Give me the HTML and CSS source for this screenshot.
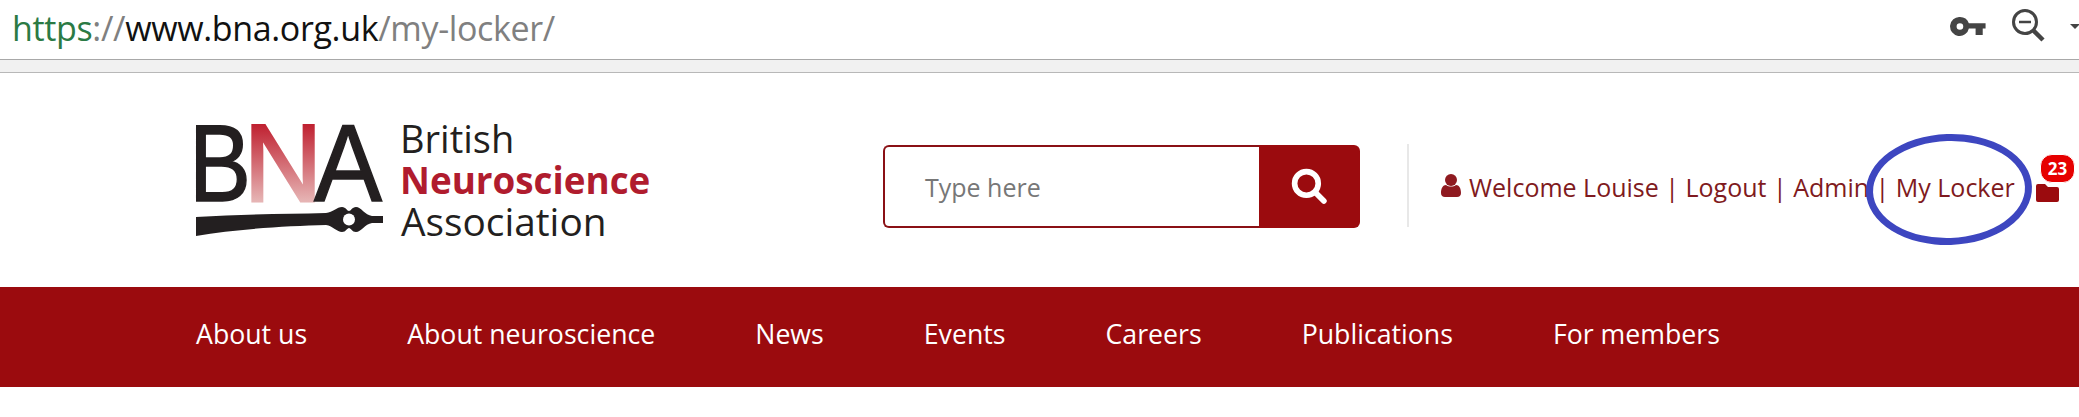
FILE: index.html
```html
<!DOCTYPE html>
<html lang="en">
<head>
    <meta charset="UTF-8">
    <meta name="viewport" content="width=device-width, initial-scale=1.0">
    <title>My Locker</title>
    <link rel="stylesheet" href="styles.css">
</head>
<body>
    <div class="addressbar">
        <div class="url"><span class="scheme">https</span><span class="path">://</span><span class="host">www.bna.org.uk</span><span class="path">/my-locker/</span></div>
        <div class="browser-icons">
            <svg class="key-icon" width="36" height="19" viewBox="0 0 37 20">
                <path fill="#444" fill-rule="evenodd" d="M10 0a10 10 0 0 1 9.4 6.5H37v5.500h-3v7h-7.500v-7H19.400A10 10 0 1 1 10 0zm0 6.500a3.500 3.500 0 1 0 0 7 3.500 3.500 0 0 0 0-7z"/>
            </svg>
            <svg class="zoom-icon" width="34" height="34" viewBox="0 0 34 34">
                <circle cx="14" cy="13" r="11.500" fill="none" stroke="#444" stroke-width="3"/>
                <path d="M8 13h12" stroke="#444" stroke-width="2.500"/>
                <path d="M22 21l10 10" stroke="#444" stroke-width="4.500"/>
            </svg>
            <span class="caret"></span>
        </div>
    </div>
    <div class="tabstrip"></div>

    <header class="header">
        <div class="logo">
            <svg class="logo-mark" width="200" height="140" viewBox="0 -22 200 140">
                <defs>
                    <linearGradient id="fadeRed" gradientUnits="userSpaceOnUse" x1="0" y1="3" x2="0" y2="81">
                        <stop offset="0" stop-color="#bf1e2e"/>
                        <stop offset="1" stop-color="#e6b4b4"/>
                    </linearGradient>
                </defs>
                <text class="logo-letter" x="3" y="81" textLength="62" lengthAdjust="spacingAndGlyphs">B</text>
                <text class="logo-letter logo-n" x="58" y="81" textLength="78" lengthAdjust="spacingAndGlyphs">N</text>
                <text class="logo-letter" x="128" y="81" textLength="68" lengthAdjust="spacingAndGlyphs">A</text>
                <path fill="#231f20" d="M10 97C55 94 100 94 140 93C147 92 151 87 156 87C160 87 161 91 163 91C165 91 166 87 170 87C175 87 179 95 186 96H197V103H186C179 104 175 112 170 112C166 112 165 108 163 108C161 108 160 112 156 112C151 112 147 106 140 105C100 106 50 109 10 116z"/>
                <circle cx="163" cy="99.500" r="6" fill="#fff"/>
            </svg>
            <div class="logo-text">
                <span>British</span>
                <strong>Neuroscience</strong>
                <span class="logo-assoc">Association</span>
            </div>
        </div>

        <form class="search">
            <div class="search-field">Type here</div>
            <div class="search-btn">
                <svg width="37" height="37" viewBox="0 0 36 36">
                    <circle cx="15" cy="15" r="11.500" fill="none" stroke="#fff" stroke-width="5.500"/>
                    <path d="M24 24l8 8" stroke="#fff" stroke-width="5.500" stroke-linecap="round"/>
                </svg>
            </div>
        </form>

        <div class="usernav">
            <svg class="user-icon" width="20" height="23" viewBox="0 0 20 23">
                <circle cx="10" cy="6" r="6" fill="#8f1a20"/>
                <path fill="#8f1a20" d="M0 19c0-5 2-8 5-8 1.500 1 3 1.500 5 1.500s3.500-.5 5-1.500c3 0 5 3 5 8 0 2.500-1.500 4-4 4H4c-2.500 0-4-1.500-4-4z"/>
            </svg>
            <span class="user-links">Welcome Louise | Logout | Admin | My Locker</span>
            <div class="locker">
                <svg width="23" height="18" viewBox="0 0 23 18">
                    <path fill="#9b0b0e" d="M2 0h7l3 3h9a2 2 0 0 1 2 2v11a2 2 0 0 1-2 2H2a2 2 0 0 1-2-2V2a2 2 0 0 1 2-2z"/>
                </svg>
                <span class="badge">23</span>
            </div>
        </div>
        <div class="circled"></div>
    </header>

    <nav class="mainnav">
        <a>About us</a>
        <a>About neuroscience</a>
        <a>News</a>
        <a>Events</a>
        <a>Careers</a>
        <a>Publications</a>
        <a>For members</a>
    </nav>
</body>
</html>
```

FILE: styles.css
```css
body {
    margin: 0;
    height: 417px;
    overflow: hidden;
    background-color: #ffffff;
    font-family: "Open Sans", Arial, sans-serif;
}

.addressbar {
    height: 59px;
    display: flex;
    align-items: center;
    justify-content: space-between;
    padding-left: 12px;
    border-bottom: 1px solid #a8a8a8;
}

.url {
    font-size: 34px;
    letter-spacing: -0.35px;
    margin-top: -4px;
}

.scheme {
    color: #2b7a44;
}

.host {
    color: #111;
}

.path {
    color: #808080;
}

.browser-icons {
    display: flex;
    align-items: center;
    gap: 25px;
    margin-top: -7px;
}

.caret {
    width: 0;
    height: 0;
    border-left: 5px solid transparent;
    border-right: 5px solid transparent;
    border-top: 5px solid #444;
    margin-right: -1px;
}

.tabstrip {
    height: 12px;
    background-color: #f1f1f1;
    border-bottom: 1px solid #b8b8b8;
}

.header {
    position: relative;
    height: 214px;
    display: flex;
    align-items: flex-start;
    padding-left: 186px;
}

.logo {
    display: flex;
    align-items: flex-start;
    gap: 14px;
    margin-top: 47px;
    width: 697px;
}

.logo-mark {
    margin-top: -22px;
}

.logo-letter {
    font-family: "Liberation Sans", Arial, sans-serif;
    font-size: 109px;
    fill: #231f20;
    stroke: #231f20;
    stroke-width: 1.5px;
}

.logo-n {
    fill: url(#fadeRed);
    stroke: url(#fadeRed);
    stroke-width: 3px;
}

.logo-text {
    display: flex;
    flex-direction: column;
    font-size: 38px;
    line-height: 41.5px;
    color: #231f20;
    margin-top: -2px;
}

.logo-text strong {
    color: #b01c2e;
    font-weight: 700;
    font-size: 36.8px;
}

.logo-assoc {
    font-size: 38.8px;
    margin-left: 1px;
}

.search {
    display: flex;
    width: 477px;
    height: 83px;
    margin-top: 72px;
}

.search-field {
    flex: 1;
    display: flex;
    align-items: center;
    padding-left: 40px;
    font-size: 25px;
    color: #777;
    border: 2px solid #8a1015;
    border-right: none;
    border-radius: 6px 0 0 6px;
}

.search-btn {
    width: 101px;
    display: flex;
    align-items: center;
    justify-content: center;
    background-color: #9b0b0e;
    border-radius: 0 6px 6px 0;
}

.usernav {
    display: flex;
    align-items: center;
    gap: 8px;
    height: 83px;
    margin-top: 71px;
    margin-left: 47px;
    padding-left: 32px;
    border-left: 2px solid #e8e8e8;
    font-size: 25px;
    color: #7f1a20;
    white-space: nowrap;
}

.user-links {
    margin-top: 2px;
}

.locker {
    position: relative;
    margin-left: 13px;
    margin-top: 12px;
}

.badge {
    position: absolute;
    top: -21px;
    left: 4px;
    background-color: #e60000;
    color: #fff;
    font-size: 17px;
    font-weight: 700;
    line-height: 27px;
    padding: 0 7px;
    border-radius: 12px;
    border: 1px solid #fff;
}

/* hand drawn circle over the link */
.circled {
    position: absolute;
    left: 1866px;
    top: 61px;
    width: 152px;
    height: 97px;
    border: 7px solid #3d46c0;
    border-radius: 50%;
    transform: rotate(-2deg);
}

.mainnav {
    height: 93px;
    display: flex;
    align-items: center;
    gap: 100px;
    padding: 0 0 7px 196px;
    background-color: #9b0b0e;
}

.mainnav a {
    color: #ffffff;
    font-size: 26.7px;
}
```
